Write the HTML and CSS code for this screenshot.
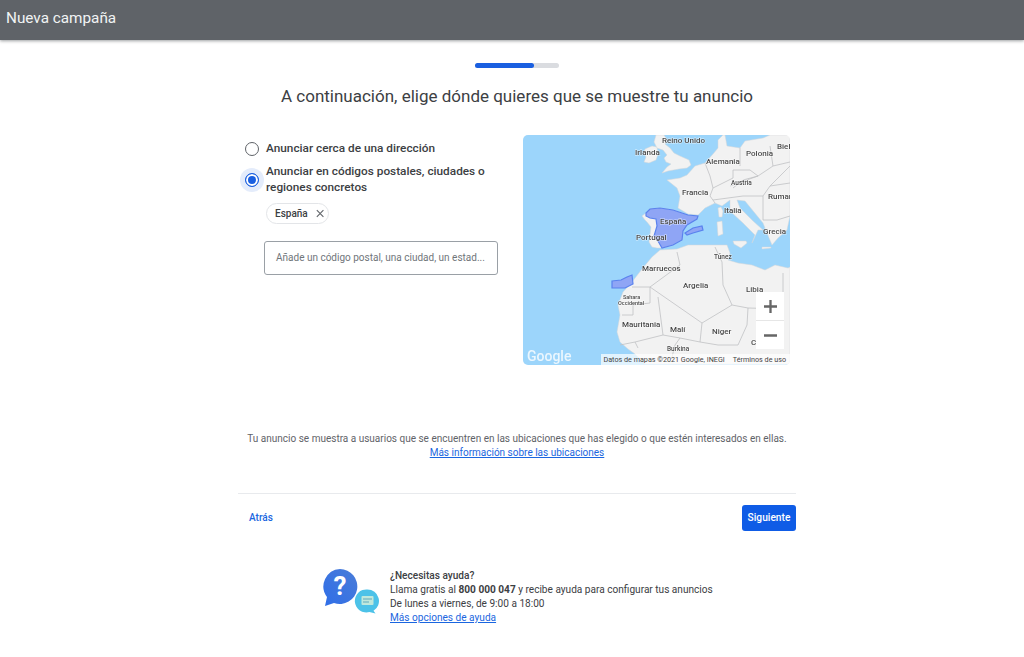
FILE: index.html
```html
<!DOCTYPE html>
<html lang="es">
<head>
    <meta charset="UTF-8">
    <title>Nueva campaña</title>
    <link rel="stylesheet" href="styles.css">
</head>
<body>
    <header class="topbar">Nueva campaña</header>

    <main class="content">
        <div class="progress"><div class="progress-fill"></div></div>
        <h1 class="title">A continuación, elige dónde quieres que se muestre tu anuncio</h1>

        <section class="columns">
            <div class="options">
                <label class="option">
                    <span class="radio"></span>
                    <span class="option-text">Anunciar cerca de una dirección</span>
                </label>
                <label class="option option-on">
                    <span class="radio radio-on"></span>
                    <span class="option-text">Anunciar en códigos postales, ciudades o regiones concretos</span>
                </label>
                <div class="chip">
                    <span>España</span>
                    <svg class="chip-x" viewBox="0 0 10 10"><path d="M1 1l8 8M9 1l-8 8"/></svg>
                </div>
                <div class="search">Añade un código postal, una ciudad, un estad...</div>
            </div>

            <div class="map">
                <svg class="map-art" viewBox="523 135 267 230">
                    <rect x="523" y="135" width="267" height="230" fill="#9cd5fb"/>
                    <g class="land">
                        <!-- irlanda, reino unido -->
                        <path d="M645 149l7-3 5 1 1 7-2 6-7 3-5-1 2-5-2-4z"/>
                        <path d="M656 135h8l3 5-2 4 5 4 4 5 6 3 9 4 2 5-4 3-8 1-11 2-6 2 5-6 4-3-5-2-2-4 3-3-4-5-6-2-3-6z"/>
                        <!-- europa -->
                        <path d="M667 180L680 178 687 175 695 166 705 163 713 154 718 148 718 140 723 135H725L727 146 740 148 745 141 763 138 770 135H790V216L787 230 778 238 772 245 767 233 763 223 745 201 737 200 740 208 753 221 763 230 758 230 752 243 755 235 743 223 730 211 730 200 722 206 715 203 705 208 698 215 688 214 678 208 680 196 677 188z"/>
                        <!-- iberia -->
                        <path d="M646 213l4-4 10-1 13 2 15 5 10 1-1 3-10 6-4 6-1 9-9 5-11 3-5 0-5-1-3-5 2-15-4-5-2-2-3-4z"/>
                        <!-- islas -->
                        <path d="M718 208l3-1 2 4-1 6-3 0z"/>
                        <path d="M717 222l5-1 1 13-5 2z"/>
                        <path d="M733 241l13 0 1 2-6 5-7-4z"/>
                        <path d="M762 247l9 0 0 1-9 1z"/>
                        <!-- africa -->
                        <path d="M660 250l17-1 11-4h39l3 8-2 7 10 3 14 2 13 5 10-5 13 3 2-1v97H645l-10-10-7-5-8-7-3-10 3-17-2-10 5-13 9-10 10-13 10-12z"/>
                    </g>
                    <g class="borders">
                        <path d="M705 163l5 13 3 12-3 8 5 7M740 148v18M713 188l20-10v-8l17 0 8 6-15 4-10 8M713 200l30-4 20 0 7-10 20-3M763 196v24h14l13-4M770 146l3 20-15 10M770 186l20-20M730 186l28-10M773 166l17-4"/>
                        <path d="M677 252l3 13-30 22h-18M650 287l52 36 30-18-9-20-1-23-7-15M732 305l16 3 35 1M748 308l-1 17-9 20M702 323l-2 19 18 3 20 0M650 287v16l-17 2v10h-11M658 297l5 38 17 3 20 4M663 335l-28 7 3 6M620 345l15-3M783 273v36M680 338l-5 7-3 12"/>
                    </g>
                    <g class="highlight">
                        <path d="M646 213l4-4 10-1 13 2 15 5 10 1-1 3-10 6-4 6-1 9-9 5-11 3-4-7-4-5 3-10-1-7-6-1-4-2z"/>
                        <path d="M685 233l8-5 9-2 1 4-10 3-6 2z"/>
                        <path d="M612 281l9-1 6-3 5-2 1 9-8 4-13 0z"/>
                    </g>
                    <g class="map-labels">
                        <text x="662" y="143">Reino Unido</text>
                        <text x="635" y="155">Irlanda</text>
                        <text x="706" y="164">Alemania</text>
                        <text x="746" y="156">Polonia</text>
                        <text x="777" y="149">Biel</text>
                        <text x="682" y="195">Francia</text>
                        <text class="small" x="731" y="185">Austria</text>
                        <text x="768" y="199">Rumar</text>
                        <text x="724" y="213">Italia</text>
                        <text x="660" y="224">España</text>
                        <text x="636" y="240">Portugal</text>
                        <text x="763" y="234">Grecia</text>
                        <text x="642" y="271">Marruecos</text>
                        <text class="small" x="714" y="259">Túnez</text>
                        <text x="683" y="288">Argelia</text>
                        <text x="746" y="292">Libia</text>
                        <text class="tiny" x="623" y="299">Sahara</text>
                        <text class="tiny" x="618" y="305">Occidental</text>
                        <text x="622" y="327">Mauritania</text>
                        <text x="670" y="332">Malí</text>
                        <text x="712" y="334">Niger</text>
                        <text x="751" y="345">C</text>
                        <text class="small" x="667" y="351">Burkina</text>
                    </g>
                </svg>
                <span class="google">Google</span>
                <div class="attrib">
                    <span>Datos de mapas ©2021 Google, INEGI</span>
                    <span>Términos de uso</span>
                </div>
                <div class="zoom">
                    <div class="zoom-btn"><svg viewBox="0 0 14 14"><path d="M0 7h14M7 0v14"/></svg></div>
                    <div class="zoom-btn zoom-minus"><svg viewBox="0 0 14 14"><path d="M0 7h14"/></svg></div>
                </div>
            </div>
        </section>

        <p class="note">
            Tu anuncio se muestra a usuarios que se encuentren en las ubicaciones que has elegido o que estén interesados en ellas.<br>
            <a href="#">Más información sobre las ubicaciones</a>
        </p>

        <div class="actions">
            <a class="back" href="#">Atrás</a>
            <button class="next">Siguiente</button>
        </div>

        <div class="help">
            <svg class="help-icon" viewBox="322 569 58 45">
                <defs>
                    <linearGradient id="bubble" x1="0" y1="1" x2="1" y2="0">
                        <stop offset="0" stop-color="#2f6ee8"/>
                        <stop offset="1" stop-color="#4a7cd8"/>
                    </linearGradient>
                </defs>
                <path d="M340 569a17.500 17.500 0 1 1-6 34l-9 3 2-9a17.500 17.500 0 0 1 13-28z" fill="url(#bubble)"/>
                <text x="340" y="595" class="help-q">?</text>
                <path d="M367.500 589.500a11.500 11.500 0 0 1 6 21.300l2 2.700-6-1.500a11.500 11.500 0 1 1-2-22.500z" fill="#4cc2e8"/>
                <rect x="361.500" y="596" width="12" height="9" rx="1" fill="#bfe8dc"/>
                <path d="M363 599h9M363 602h6" stroke="#5fa9bd" stroke-width="1"/>
            </svg>
            <div class="help-text">
                <strong class="help-title">¿Necesitas ayuda?</strong>
                <span>Llama gratis al <b>800 000 047</b> y recibe ayuda para configurar tus anuncios</span>
                <span>De lunes a viernes, de 9:00 a 18:00</span>
                <a href="#">Más opciones de ayuda</a>
            </div>
        </div>
    </main>
</body>
</html>
```

FILE: styles.css
```css
body {
    margin: 0;
    font-family: Roboto, "Liberation Sans", sans-serif;
    background: #fff;
    color: #3c4043;
}

.topbar {
    height: 40px;
    line-height: 36px;
    padding-left: 6px;
    background: #5f6368;
    color: #f1f3f4;
    font-size: 15.300px;
    box-shadow: 0 1px 3px rgba(60, 64, 67, 0.5);
}

.content {
    width: 558px;
    margin-left: 238px;
}

.progress {
    width: 84px;
    height: 5px;
    margin: 23px auto 0;
    border-radius: 3px;
    background: #dadce0;
}

.progress-fill {
    width: 59px;
    height: 5px;
    border-radius: 3px;
    background: #1a5fe0;
}

.title {
    margin: 16px 0 0;
    font-size: 17px;
    line-height: 24px;
    font-weight: 400;
    text-align: center;
    color: #3c4043;
}

.columns {
    display: flex;
    margin-top: 27px;
    height: 230px;
}

.options {
    width: 285px;
    padding-top: 5px;
}

.option {
    display: flex;
    align-items: flex-start;
    font-size: 11.800px;
    font-weight: 500;
    line-height: 16px;
    color: #3c4043;
    margin-bottom: 7px;
}

.option-on {
    margin-bottom: 0;
}

.option-text {
    width: 225px;
}

.radio {
    flex: none;
    box-sizing: border-box;
    width: 14px;
    height: 14px;
    margin: 2px 7px 0 7px;
    border: 1.500px solid #5f6368;
    border-radius: 50%;
}

.radio-on {
    margin-top: 10px;
    border-color: #1a5fe0;
    background: #1a5fe0;
    box-shadow: inset 0 0 0 2px #fff, 0 0 0 5px #e4ecfb;
}

.chip {
    display: flex;
    align-items: center;
    gap: 8px;
    box-sizing: border-box;
    width: 63px;
    height: 21px;
    margin: 8px 0 0 28px;
    padding: 0 4px 0 8px;
    border: 1px solid #e3e5e8;
    border-radius: 12px;
    font-size: 10px;
    font-weight: 500;
}

.chip-x {
    width: 9px;
    height: 9px;
}

.chip-x path {
    fill: none;
    stroke: #5f6368;
    stroke-width: 1.300;
}

.search {
    box-sizing: border-box;
    width: 234px;
    height: 34px;
    margin: 17px 0 0 26px;
    padding-left: 11px;
    border: 1px solid #9aa0a6;
    border-radius: 3px;
    line-height: 32px;
    font-size: 10px;
    color: #70757a;
}

.map {
    position: relative;
    width: 267px;
    height: 230px;
    overflow: hidden;
    border-radius: 5px;
}

.map-art {
    display: block;
    width: 267px;
    height: 230px;
    filter: blur(0.3px);
}

.land path {
    fill: #f2f2f2;
    stroke: #d4d6d8;
    stroke-width: 0.500;
}

.borders path {
    fill: none;
    stroke: #c0c2c4;
    stroke-width: 0.800;
}

.highlight path {
    fill: #8fa5f5;
    stroke: #5a82ee;
    stroke-width: 1.200;
}

.map-labels text {
    font-size: 8px;
    font-weight: 500;
    fill: #4a4a4a;
    stroke: rgba(255, 255, 255, 0.6);
    stroke-width: 1.200;
    paint-order: stroke;
}

.map-labels .small {
    font-size: 6.500px;
}

.map-labels .tiny {
    font-size: 5.500px;
}

.google {
    position: absolute;
    left: 4px;
    bottom: 1px;
    font-size: 14px;
    font-weight: 500;
    color: #fff;
    opacity: 0.8;
}

.attrib {
    position: absolute;
    right: 0;
    bottom: 0;
    display: flex;
    gap: 8px;
    padding: 0 4px 0 2px;
    background: rgba(255, 255, 255, 0.7);
    font-size: 7.200px;
    line-height: 11px;
    color: #444;
}

.zoom {
    position: absolute;
    top: 157px;
    right: 6px;
    width: 28px;
    background: #fff;
}

.zoom-btn {
    display: flex;
    align-items: center;
    justify-content: center;
    height: 28px;
}

.zoom-btn svg {
    width: 13px;
    height: 13px;
}

.zoom-btn path {
    fill: none;
    stroke: #666;
    stroke-width: 2.500;
}

.zoom-minus {
    border-top: 1px solid #e6e6e6;
}

.note {
    margin: 67px 0 0;
    font-size: 10px;
    line-height: 14px;
    text-align: center;
    white-space: nowrap;
    color: #5f6368;
}

.note a,
.help-text a {
    color: #1a66e0;
}

.actions {
    display: flex;
    align-items: center;
    justify-content: space-between;
    margin-top: 33px;
    height: 47px;
    border-top: 1px solid #e8eaed;
}

.back {
    margin-left: 11px;
    font-size: 10px;
    font-weight: 500;
    color: #1a66e0;
    text-decoration: none;
}

.next {
    width: 54px;
    height: 26px;
    padding: 0;
    border: none;
    border-radius: 3px;
    background: #0f5ce6;
    color: #fff;
    font-family: inherit;
    font-size: 10.200px;
    font-weight: 500;
}

.help {
    display: flex;
    margin: 28px 0 0 84px;
}

.help-icon {
    width: 58px;
    height: 45px;
}

.help-q {
    font-size: 26px;
    font-weight: 700;
    fill: #fff;
    text-anchor: middle;
}

.help-text {
    display: flex;
    flex-direction: column;
    align-items: flex-start;
    margin-left: 10px;
    font-size: 10.100px;
    line-height: 14px;
    color: #3c4043;
}

.help-title {
    font-weight: 500;
}
```
